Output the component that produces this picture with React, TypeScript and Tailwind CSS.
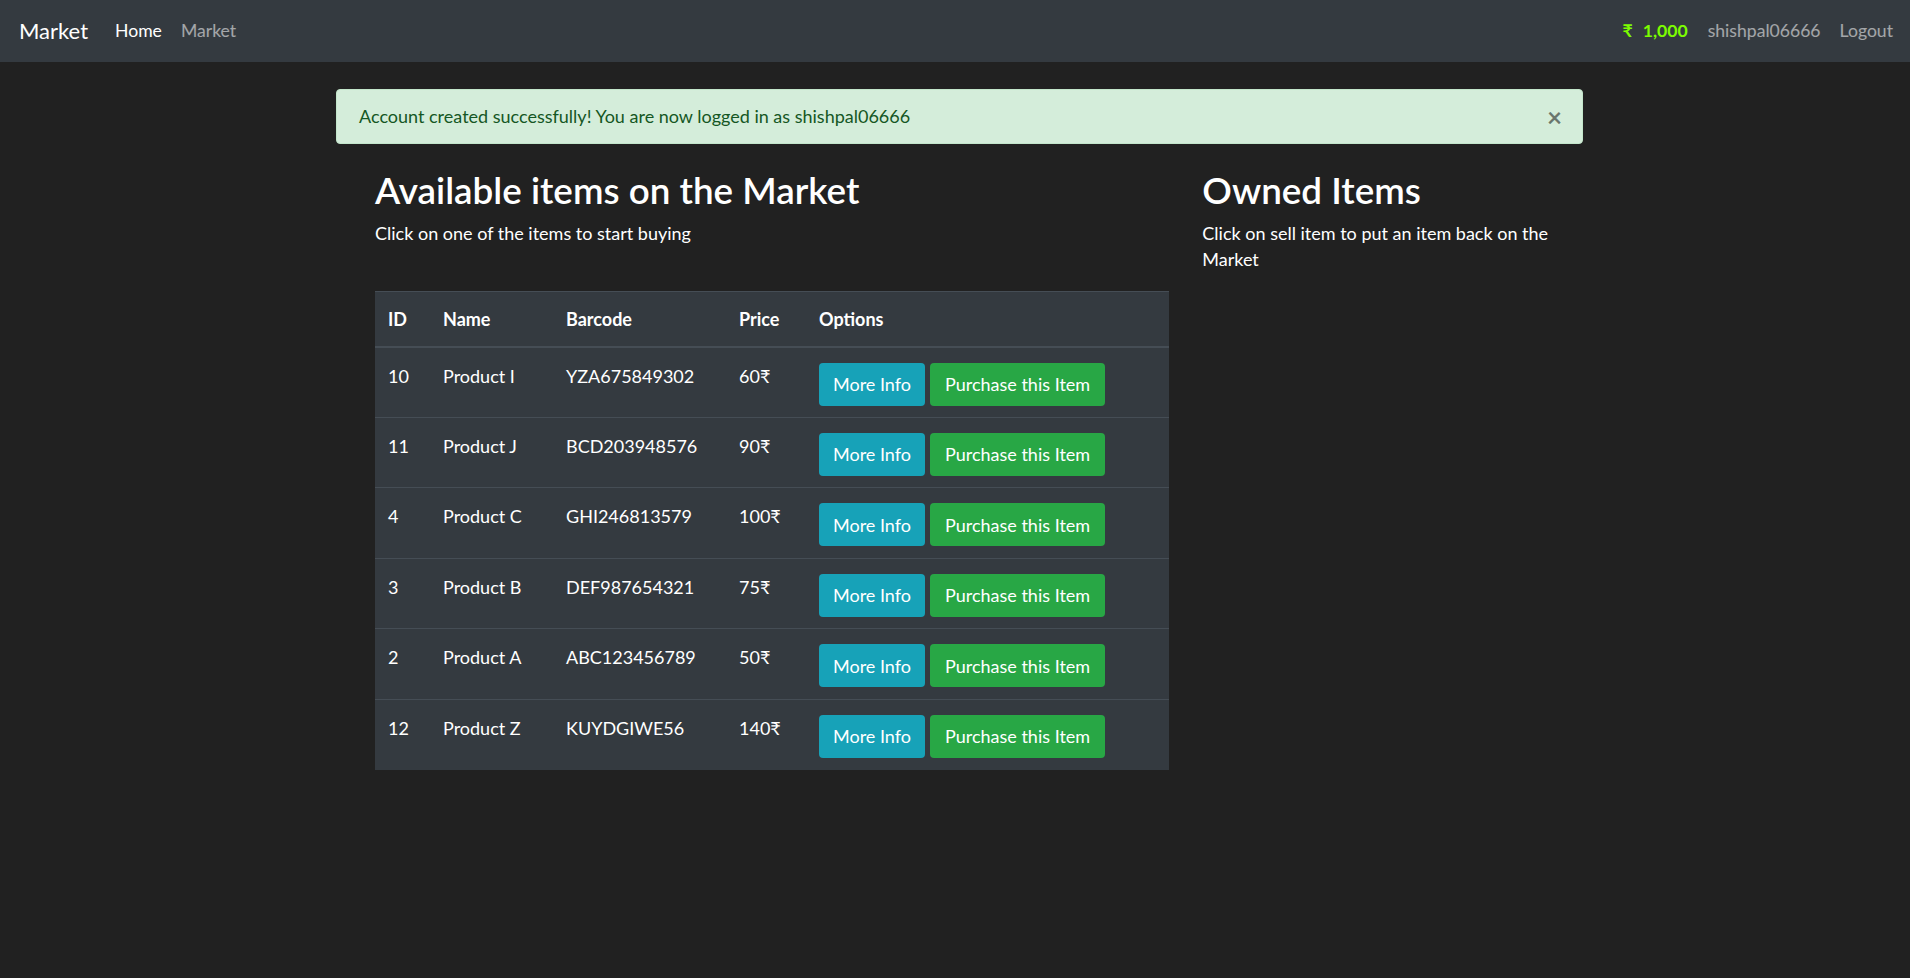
import React from "react";

const items = [
  { id: 10, name: "Product I", barcode: "YZA675849302", price: "60₹" },
  { id: 11, name: "Product J", barcode: "BCD203948576", price: "90₹" },
  { id: 4, name: "Product C", barcode: "GHI246813579", price: "100₹" },
  { id: 3, name: "Product B", barcode: "DEF987654321", price: "75₹" },
  { id: 2, name: "Product A", barcode: "ABC123456789", price: "50₹" },
  { id: 12, name: "Product Z", barcode: "KUYDGIWE56", price: "140₹" },
];

const font = { fontFamily: "Lato, 'Noto Sans', 'DejaVu Sans', sans-serif" };

const Navbar = () => (
  <nav className="h-[62px] bg-[#343a40] flex items-center justify-between pl-[19px] pr-[17px] text-[17.6px]">
    <div className="flex items-center">
      <span className="text-[22px] text-white mr-[27px] leading-none">Market</span>
      <span className="text-white">Home</span>
      <span className="text-white/55 ml-[19px]">Market</span>
    </div>
    <div className="flex items-center">
      <span className="text-[#7cfc00] font-bold">
        ₹<span className="ml-[10px]">1,000</span>
      </span>
      <span className="text-white/55 ml-[20px]">shishpal06666</span>
      <span className="text-white/55 ml-[19px]">Logout</span>
    </div>
  </nav>
);

const Market = () => {
  return (
    <div style={font} className="min-h-[978px] bg-[#212121] text-[18px] leading-[26.4px] text-white">
      <Navbar />

      <div className="ml-[336px] w-[1247px] pt-[27px]">
        <div className="flex items-center justify-between h-[55px] px-[22px] bg-[#d4edda] border border-[#c3e6cb] rounded-[4px] text-[#155724]">
          <span>Account created successfully! You are now logged in as shishpal06666</span>
          <span className="text-[26px] font-bold text-black/50 leading-none mr-[-2px]">×</span>
        </div>

        <div className="flex gap-[33px] pl-[39px] pt-[25px]">
          <div className="w-[795px]">
            <h2 className="text-[36.8px] leading-[42px] font-semibold mb-[9px]">
              Available items on the Market
            </h2>
            <p>Click on one of the items to start buying</p>

            <table className="mt-[45px] w-full bg-[#343a40] border-collapse table-fixed">
              <colgroup>
                <col className="w-[55px]" />
                <col className="w-[123px]" />
                <col className="w-[173px]" />
                <col className="w-[80px]" />
                <col />
              </colgroup>
              <thead>
                <tr className="h-[55px] border-t border-b-2 border-[#454d55] text-left">
                  <th className="px-[13px] font-bold">ID</th>
                  <th className="px-[13px] font-bold">Name</th>
                  <th className="px-[13px] font-bold">Barcode</th>
                  <th className="px-[13px] font-bold">Price</th>
                  <th className="px-[13px] font-bold">Options</th>
                </tr>
              </thead>
              <tbody>
                {items.map((item, i) => (
                  <tr key={item.id} className={"h-[70.5px] border-[#454d55] " + (i > 0 ? "border-t" : "")}>
                    <td className="px-[13px] pt-[15px] align-top">{item.id}</td>
                    <td className="px-[13px] pt-[15px] align-top">{item.name}</td>
                    <td className="px-[13px] pt-[15px] align-top">{item.barcode}</td>
                    <td className="px-[13px] pt-[15px] align-top">{item.price}</td>
                    <td className="px-[13px] pt-[15px] align-top">
                      <div className="flex gap-[5px]">
                        <button className="h-[43px] px-[14px] rounded-[4px] bg-[#17a2b8] text-white">
                          More Info
                        </button>
                        <button className="h-[43px] px-[15px] rounded-[4px] bg-[#28a745] text-white">
                          Purchase this Item
                        </button>
                      </div>
                    </td>
                  </tr>
                ))}
              </tbody>
            </table>
          </div>

          <div className="w-[381px]">
            <h2 className="text-[36.8px] leading-[42px] font-semibold mb-[9px]">Owned Items</h2>
            <p>Click on sell item to put an item back on the Market</p>
          </div>
        </div>
      </div>
    </div>
  );
};

export default function App() {
  return <Market />;
}
